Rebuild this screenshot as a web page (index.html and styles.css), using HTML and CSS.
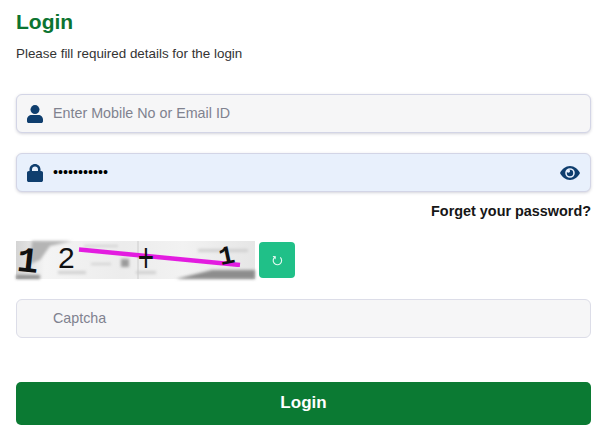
FILE: index.html
```html
<!DOCTYPE html>
<html lang="en">
<head>
<meta charset="utf-8">
<title>Login</title>
<link rel="stylesheet" href="styles.css">
</head>
<body>
<main class="login">
  <h1 class="title">Login</h1>
  <p class="subtitle">Please fill required details for the login</p>
  <form class="form">
    <div class="field field-user">
      <svg class="icon" viewBox="0 0 16 18" aria-hidden="true"><circle cx="8" cy="4.600" r="4.500"/><path d="M4.600 10h6.800c2.500 0 4.600 2 4.600 4.400v1.800c0 1-.8 1.800-1.800 1.800H1.800C.8 18 0 17.200 0 16.200v-1.800C0 12 2.100 10 4.600 10z"/></svg>
      <input class="input" type="text" placeholder="Enter Mobile No or Email ID">
    </div>
    <div class="field field-pass filled">
      <svg class="icon" viewBox="0 0 16 18" aria-hidden="true"><path d="M2.500 7V5.300C2.500 2.300 5 0 8 0s5.500 2.300 5.500 5.300V7h.7C15.200 7 16 7.800 16 8.800v7.400c0 1-.8 1.800-1.800 1.800H1.800C.8 18 0 17.200 0 16.200V8.800C0 7.800.8 7 1.800 7zm2.500 0h6V5.300C11 3.700 9.700 2.400 8 2.400S5 3.700 5 5.300z"/></svg>
      <input class="input" type="password" value="12345678901">
      <svg class="eye" viewBox="0 0 20 14" aria-hidden="true"><path fill-rule="evenodd" d="M10 0c4.300 0 8 2.900 10 7-2 4.100-5.700 7-10 7S2 11.100 0 7c2-4.100 5.700-7 10-7zm0 2.200a4.800 4.800 0 1 0 0 9.600 4.800 4.800 0 0 0 0-9.600z"/><path fill-rule="evenodd" d="M10 3.800a3.200 3.200 0 1 1-3.200 3.200c0-.4.100-.8.200-1.100.3.500.8.800 1.400.8.900 0 1.600-.7 1.600-1.600 0-.5-.3-1-.7-1.300.2 0 .4 0 .7 0z"/></svg>
    </div>
    <a class="forgot" href="#">Forget your password?</a>
    <div class="captcha-row">
      <svg class="captcha" viewBox="0 0 239 38" aria-hidden="true">
        <defs>
          <linearGradient id="fade" x1="0" x2="1" y1="0" y2="0">
            <stop offset="0" stop-color="#d4d4d4"/><stop offset=".12" stop-color="#f4f4f4"/><stop offset=".45" stop-color="#ececec"/><stop offset=".7" stop-color="#f2f2f2"/><stop offset="1" stop-color="#e6e6e6"/>
          </linearGradient>
          <filter id="soft"><feGaussianBlur stdDeviation="1.500"/></filter>
          <filter id="line"><feGaussianBlur stdDeviation=".4"/></filter>
        </defs>
        <rect width="239" height="38" fill="url(#fade)"/>
        <g filter="url(#soft)">
          <path d="M16 0h40l-22 5-10 14-10 4z" fill="#b4b4b4"/>
          <path d="M0 34h24v4H0z" fill="#8f8f8f"/>
          <path d="M160 38l36-9h43v9z" fill="#8d8d8d"/>
          <path d="M105 18h8v8h-8z" fill="#9b9b9b"/>
          <path d="M68 4h34v2H68zM182 8h50v3h-50zM120 30h20v3h-20zM42 30h28v3H42zM75 22h20v2H75z" fill="#cfcfcf"/>
        </g>
        <path d="M122 0v38" stroke="#cccccc"/>
        <text class="cap-bold" transform="rotate(6 12 20)" x="1" y="31">1</text>
        <text class="cap-light" x="42" y="27">2</text>
        <path d="M63 8.500 224 24" stroke="#e31fe0" stroke-width="4.500" filter="url(#line)"/>
        <text class="cap-plus" transform="scale(.7 1)" x="174" y="31">+</text>
        <text class="cap-one" transform="rotate(-12 210 15)" x="203" y="23">1</text>
      </svg>
      <button class="refresh" type="button" aria-label="Refresh captcha">
        <svg class="refresh-icon" viewBox="0 0 12 12" aria-hidden="true"><path d="M3.300 2.200A4.600 4.600 0 1 0 9 2.600"/><path d="M1 1.600 3.600 1.900 3.300 4.500"/></svg>
      </button>
    </div>
    <div class="field field-captcha">
      <input class="input" type="text" placeholder="Captcha">
    </div>
    <button class="submit" type="button">Login</button>
  </form>
</main>
</body>
</html>
```
FILE: styles.css
```css
* { box-sizing: border-box; }
html, body { margin: 0; padding: 0; background: #fff; }
body { font-family: "Liberation Sans", Arial, sans-serif; height: 433px; overflow: hidden; }
.login { padding: 10px 9px 0 16px; }
.title { margin: 0; font-size: 21px; line-height: 24px; font-weight: 700; color: #0c7431; }
.subtitle { margin: 10px 0 0; font-size: 13.400px; line-height: 20px; color: #333; }
.form { display: flex; flex-direction: column; margin-top: 30px; }
.field { display: flex; align-items: center; height: 39px; padding: 0 10px; background: #f6f6f7; border: 1px solid #d3d5e6; border-radius: 6px; box-shadow: 0 1px 3px rgba(60, 60, 90, .22); }
.field-pass { margin-top: 20px; }
.filled { background: #e8f0fc; }
.icon { width: 16px; height: 18px; flex: none; fill: #0f3e6e; }
.input { flex: 1; min-width: 0; height: 100%; margin-left: 10px; padding: 0 0 2px; border: 0; outline: 0; background: transparent; font: 14.300px "Liberation Sans", Arial, sans-serif; color: #000; }
.input::placeholder { color: #80828f; opacity: 1; }
.eye { width: 20px; height: 14px; flex: none; fill: #0f3e6e; }
.forgot { align-self: flex-end; margin-top: 10px; font-size: 14.400px; line-height: 18px; font-weight: 700; color: #161616; text-decoration: none; }
.captcha-row { display: flex; align-items: center; gap: 4px; margin-top: 21px; }
.captcha { width: 239px; height: 38px; flex: none; display: block; overflow: visible; }
.cap-bold { font: 700 36px "Liberation Mono", monospace; fill: #111; }
.cap-light { font: 30px "Liberation Sans", sans-serif; fill: #111; }
.cap-plus { font: 40px "Liberation Sans", sans-serif; fill: #111; }
.cap-one { font: 700 26px "Liberation Mono", monospace; fill: #111; }
.refresh { display: flex; align-items: center; justify-content: center; width: 36px; height: 36px; padding: 0; border: 0; border-radius: 4px; background: #20c088; }
.refresh-icon { width: 11px; height: 11px; fill: none; stroke: #e6faf2; stroke-width: 1.200; }
.field-captcha { margin-top: 20px; box-shadow: none; padding-left: 36px; border-color: #dcdde8; }
.field-captcha .input { margin-left: 0; }
.submit { height: 43px; margin-top: 44px; padding: 0 0 2px; border: 0; border-radius: 5px; background: #0b7a33; color: #fff; font: 700 17px "Liberation Sans", Arial, sans-serif; }
```
